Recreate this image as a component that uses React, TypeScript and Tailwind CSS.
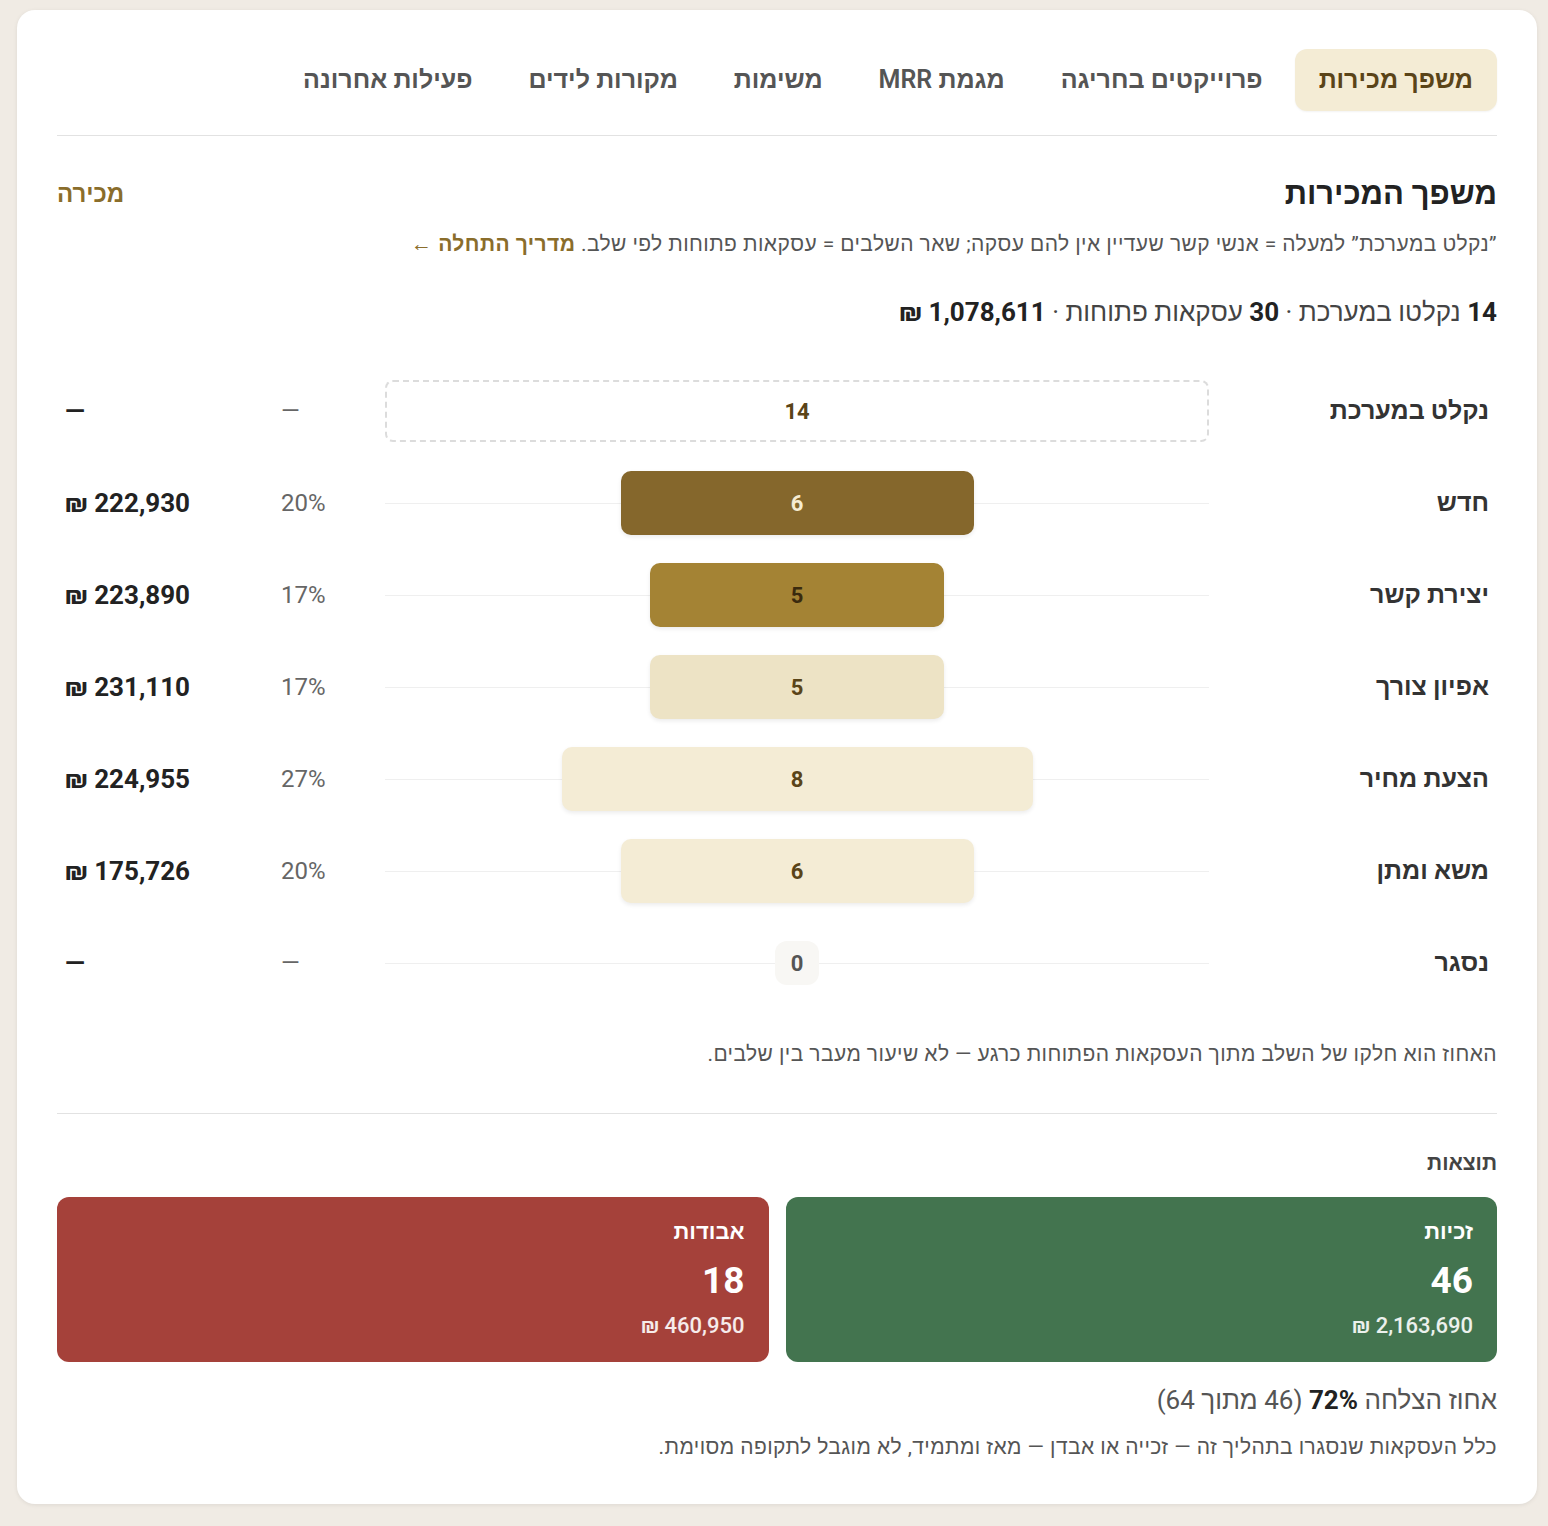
import React from "react";

const tabs = ["משפך מכירות", "פרוייקטים בחריגה", "מגמת MRR", "משימות", "מקורות לידים", "פעילות אחרונה"];

type Stage = { label: string; count: number; pct: string; amount: string; bar: string; text: string; kind?: "dashed" | "zero" };

const stages: Stage[] = [
  { label: "נקלט במערכת", count: 14, pct: "—", amount: "—", bar: "", text: "text-[#5a4418]", kind: "dashed" },
  { label: "חדש", count: 6, pct: "20%", amount: "222,930 ₪", bar: "bg-[#85672c]", text: "text-[#f6ecd2]" },
  { label: "יצירת קשר", count: 5, pct: "17%", amount: "223,890 ₪", bar: "bg-[#a48334]", text: "text-[#3a2a0e]" },
  { label: "אפיון צורך", count: 5, pct: "17%", amount: "231,110 ₪", bar: "bg-[#ede3c5]", text: "text-[#5a4418]" },
  { label: "הצעת מחיר", count: 8, pct: "27%", amount: "224,955 ₪", bar: "bg-[#f4ecd5]", text: "text-[#5a4418]" },
  { label: "משא ומתן", count: 6, pct: "20%", amount: "175,726 ₪", bar: "bg-[#f4ecd5]", text: "text-[#5a4418]" },
  { label: "נסגר", count: 0, pct: "—", amount: "—", bar: "", text: "text-[#666]", kind: "zero" },
];

const MAX = 14;
const BAR_W = 824;

export default function App() {
  return (
    <div
      dir="rtl"
      className="min-h-screen bg-[#f0ebe4] pt-[10px] pr-[11px] pl-[17px] pb-[23px]"
      style={{ fontFamily: 'Roboto, "Liberation Sans", sans-serif' }}
    >
      <div className="bg-white rounded-[18px] shadow-[0_1px_4px_rgba(0,0,0,0.08)] px-10 pt-[39px] pb-[44px]">
        {/* Tabs */}
        <div className="flex items-center gap-2 pb-6 border-b border-[#e2e2e2]">
          {tabs.map((t, i) => (
            <div
              key={t}
              className={
                i === 0
                  ? "h-[62px] px-6 flex items-center rounded-[12px] bg-[#f4ecd5] text-[#5a4418] text-[25px] font-semibold shadow-[0_1px_2px_rgba(0,0,0,0.05)]"
                  : "h-[62px] px-6 flex items-center rounded-[12px] text-[#555] text-[25px] font-semibold"
              }
            >
              {t}
            </div>
          ))}
        </div>

        {/* Heading */}
        <div className="flex items-center justify-between mt-[40px]">
          <h2 className="text-[31px] font-bold text-[#222] leading-[36px]">משפך המכירות</h2>
          <span className="text-[24px] font-semibold text-[#8a6d2b]">מכירה</span>
        </div>
        <p className="mt-[19px] text-[21px] tracking-[0.02em] text-[#555] leading-[26px]">
          ”נקלט במערכת” למעלה = אנשי קשר שעדיין אין להם עסקה; שאר השלבים = עסקאות פתוחות לפי שלב.{" "}
          <span className="font-bold text-[#8a6d2b]">מדריך התחלה ←</span>
        </p>

        <p className="mt-[39px] text-[26px] text-[#444] leading-[32px]">
          <b className="text-[#222]">14</b> נקלטו במערכת · <b className="text-[#222]">30</b> עסקאות פתוחות ·{" "}
          <b className="text-[#222]">1,078,611 ₪</b>
        </p>

        {/* Funnel */}
        <div className="mt-[37px] flex flex-col">
          {stages.map((s) => (
            <div key={s.label} className="grid grid-cols-[280px_824px_104px_1fr] items-center h-[92px] px-2">
              <div className="text-[25px] font-semibold text-[#333]">{s.label}</div>
              <div className="relative h-[64px] flex items-center justify-center">
                {s.kind !== "dashed" && <div className="absolute inset-x-0 top-1/2 h-px bg-[#efefef]" />}
                {s.kind === "dashed" ? (
                  <div className="w-full h-[62px] rounded-[8px] border-2 border-dashed border-[#dcdcdc] flex items-center justify-center text-[22px] font-bold text-[#5a4418]">
                    14
                  </div>
                ) : s.kind === "zero" ? (
                  <div className="relative w-[44px] h-[44px] rounded-[12px] bg-[#f8f7f4] flex items-center justify-center text-[22px] font-bold text-[#555]">
                    0
                  </div>
                ) : (
                  <div
                    className={`relative h-[64px] rounded-[10px] flex items-center justify-center text-[22px] font-bold shadow-[0_2px_4px_rgba(0,0,0,0.08)] ${s.bar} ${s.text}`}
                    style={{ width: `${Math.round((BAR_W * s.count) / MAX)}px` }}
                  >
                    {s.count}
                  </div>
                )}
              </div>
              <div className="text-left text-[24px] text-[#666]">{s.pct}</div>
              <div className="text-left text-[26px] font-bold text-[#222]">{s.amount}</div>
            </div>
          ))}
        </div>

        <p className="mt-[32px] text-[21px] tracking-[0.02em] text-[#555] leading-[26px]">
          האחוז הוא חלקו של השלב מתוך העסקאות הפתוחות כרגע — לא שיעור מעבר בין שלבים.
        </p>

        <div className="mt-[46px] border-t border-[#e2e2e2]" />

        <div className="mt-[36px] text-[21px] font-bold text-[#444] leading-[26px]">תוצאות</div>

        <div className="mt-[21px] grid grid-cols-2 gap-[17px]">
          <div className="h-[165px] rounded-[12px] bg-[#43744f] text-white px-6 pt-[22px]">
            <div className="text-[22px] font-semibold leading-[26px]">זכיות</div>
            <div className="mt-[14px] text-[37px] font-bold leading-[44px]">46</div>
            <div className="mt-[9px] text-[22px] font-medium leading-[28px] text-white/90">2,163,690 ₪</div>
          </div>
          <div className="h-[165px] rounded-[12px] bg-[#a5413a] text-white px-6 pt-[22px]">
            <div className="text-[22px] font-semibold leading-[26px]">אבודות</div>
            <div className="mt-[14px] text-[37px] font-bold leading-[44px]">18</div>
            <div className="mt-[9px] text-[22px] font-medium leading-[28px] text-white/90">460,950 ₪</div>
          </div>
        </div>

        <p className="mt-[22px] text-[26px] text-[#555] leading-[32px]">
          אחוז הצלחה <b className="text-[#222]">72%</b> (46 מתוך 64)
        </p>
        <p className="mt-[18px] text-[21px] tracking-[0.02em] text-[#555] leading-[26px]">
          כלל העסקאות שנסגרו בתהליך זה — זכייה או אבדן — מאז ומתמיד, לא מוגבל לתקופה מסוימת.
        </p>
      </div>
    </div>
  );
}
